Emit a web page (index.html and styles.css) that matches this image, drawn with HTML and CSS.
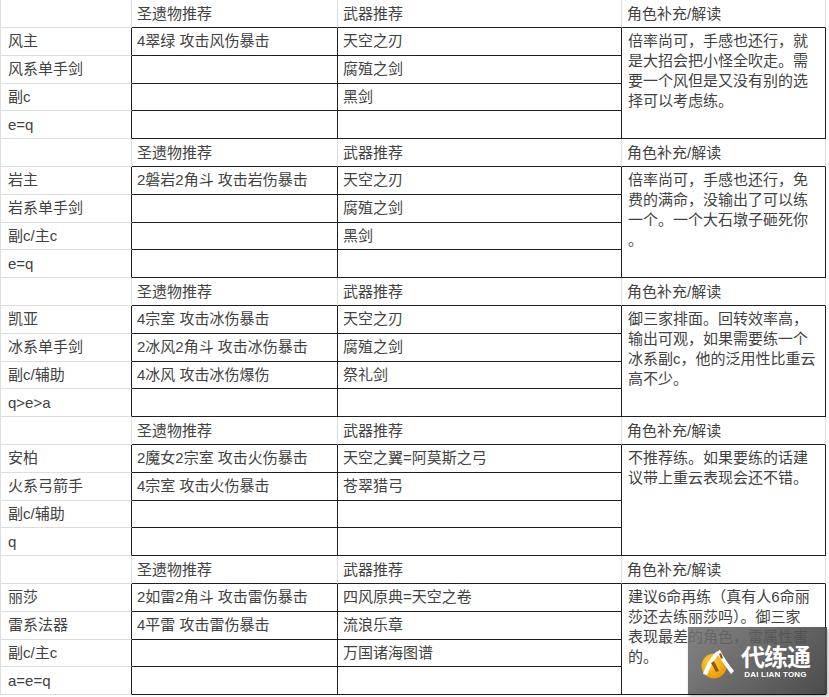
FILE: index.html
```html
<!DOCTYPE html>
<html lang="zh-CN">
<head>
<meta charset="utf-8">
<title>角色推荐</title>
<link rel="stylesheet" href="styles.css">
</head>
<body>
<div class="sheet">
  <section class="block">
    <div class="cell name head"></div><div class="cell head">圣遗物推荐</div><div class="cell head">武器推荐</div><div class="cell head">角色补充/解读</div>
    <div class="cell name">风主</div><div class="cell d">4翠绿 攻击风伤暴击</div><div class="cell d">天空之刃</div>
    <div class="cell note">倍率尚可，手感也还行，就<br>是大招会把小怪全吹走。需<br>要一个风但是又没有别的选<br>择可以考虑练。</div>
    <div class="cell name">风系单手剑</div><div class="cell d"></div><div class="cell d">腐殖之剑</div>
    <div class="cell name">副c</div><div class="cell d"></div><div class="cell d">黑剑</div>
    <div class="cell name">e=q</div><div class="cell d"></div><div class="cell d"></div>
  </section>
  <section class="block">
    <div class="cell name head"></div><div class="cell head">圣遗物推荐</div><div class="cell head">武器推荐</div><div class="cell head">角色补充/解读</div>
    <div class="cell name">岩主</div><div class="cell d">2磐岩2角斗 攻击岩伤暴击</div><div class="cell d">天空之刃</div>
    <div class="cell note">倍率尚可，手感也还行，免<br>费的满命，没输出了可以练<br>一个。一个大石墩子砸死你<br>。</div>
    <div class="cell name">岩系单手剑</div><div class="cell d"></div><div class="cell d">腐殖之剑</div>
    <div class="cell name">副c/主c</div><div class="cell d"></div><div class="cell d">黑剑</div>
    <div class="cell name">e=q</div><div class="cell d"></div><div class="cell d"></div>
  </section>
  <section class="block">
    <div class="cell name head"></div><div class="cell head">圣遗物推荐</div><div class="cell head">武器推荐</div><div class="cell head">角色补充/解读</div>
    <div class="cell name">凯亚</div><div class="cell d">4宗室 攻击冰伤暴击</div><div class="cell d">天空之刃</div>
    <div class="cell note">御三家排面。回转效率高，<br>输出可观，如果需要练一个<br>冰系副c，他的泛用性比重云<br>高不少。</div>
    <div class="cell name">冰系单手剑</div><div class="cell d">2冰风2角斗 攻击冰伤暴击</div><div class="cell d">腐殖之剑</div>
    <div class="cell name">副c/辅助</div><div class="cell d">4冰风 攻击冰伤爆伤</div><div class="cell d">祭礼剑</div>
    <div class="cell name">q&gt;e&gt;a</div><div class="cell d"></div><div class="cell d"></div>
  </section>
  <section class="block">
    <div class="cell name head"></div><div class="cell head">圣遗物推荐</div><div class="cell head">武器推荐</div><div class="cell head">角色补充/解读</div>
    <div class="cell name">安柏</div><div class="cell d">2魔女2宗室 攻击火伤暴击</div><div class="cell d">天空之翼=阿莫斯之弓</div>
    <div class="cell note">不推荐练。如果要练的话建<br>议带上重云表现会还不错。</div>
    <div class="cell name">火系弓箭手</div><div class="cell d">4宗室 攻击火伤暴击</div><div class="cell d">苍翠猎弓</div>
    <div class="cell name">副c/辅助</div><div class="cell d"></div><div class="cell d"></div>
    <div class="cell name">q</div><div class="cell d"></div><div class="cell d"></div>
  </section>
  <section class="block">
    <div class="cell name head"></div><div class="cell head">圣遗物推荐</div><div class="cell head">武器推荐</div><div class="cell head">角色补充/解读</div>
    <div class="cell name">丽莎</div><div class="cell d">2如雷2角斗 攻击雷伤暴击</div><div class="cell d">四风原典=天空之卷</div>
    <div class="cell note">建议6命再练（真有人6命丽<br>莎还去练丽莎吗）。御三家<br>表现最差的角色，雷属性害<br>的。</div>
    <div class="cell name">雷系法器</div><div class="cell d">4平雷 攻击雷伤暴击</div><div class="cell d">流浪乐章</div>
    <div class="cell name">副c/主c</div><div class="cell d"></div><div class="cell d">万国诸海图谱</div>
    <div class="cell name">a=e=q</div><div class="cell d"></div><div class="cell d"></div>
  </section>
</div>
<div class="watermark">
  <svg class="wm-logo" width="36" height="34" viewBox="0 0 36 34">
    <defs>
      <radialGradient id="yg" cx="0.4" cy="0.35" r="0.7">
        <stop offset="0" stop-color="#ffd23a"/>
        <stop offset="1" stop-color="#e99600"/>
      </radialGradient>
    </defs>
    <circle cx="14" cy="20" r="12.5" fill="url(#yg)"/>
    <path d="M3 28 C6 19 10 12 16 6 L19 8 C14 14 10 21 7 29 Z" fill="#fff"/>
    <path d="M16 6 L20 4 C24 12 29 19 34 25 L31 28 C26 21 21 14 16 6 Z" fill="#fff"/>
    <path d="M11 17 L14 15 L19 25 L16 26 Z" fill="#8a5a10"/>
    <path d="M19 8 L21 7 L23 12 L21 13 Z" fill="#8a5a10"/>
  </svg>
  <div class="wm-text">
    <div class="wm-cn">代练通</div>
    <div class="wm-en">DAI LIAN TONG</div>
  </div>
</div>
</body>
</html>
```
FILE: styles.css
```css
html, body {
  margin: 0;
  padding: 0;
  background: #fff;
}
body {
  font-family: "Liberation Sans", "Noto Sans CJK SC", sans-serif;
  font-size: 15px;
  color: #424242;
  width: 829px;
  height: 697px;
  overflow: hidden;
  position: relative;
}
.sheet {
  display: flex;
  flex-direction: column;
}
.block {
  display: grid;
  grid-template-columns: 132px 206px 284px 204px;
  grid-template-rows: 28px repeat(4, 27.75px);
}
.cell {
  box-sizing: border-box;
  border-right: 1px solid #dedede;
  border-bottom: 1px solid #dedede;
  padding: 0 5px;
  display: flex;
  align-items: center;
  white-space: nowrap;
  line-height: 20px;
}
.name {
  border-left: 1px solid #dedede;
  padding-left: 7px;
  border-right: 1px solid #1f1f1f;
}
.head {
  border-bottom: 1px solid #1f1f1f;
}
.name.head {
  border-right: 1px solid #dedede;
  border-bottom: 1px solid #dedede;
}
.d {
  border-right: 1px solid #1f1f1f;
  border-bottom: 1px solid #1f1f1f;
}
.note {
  grid-column: 4;
  grid-row: 2 / 6;
  padding: 3px 5px 0 6px;
  border-right: 1px solid #1f1f1f;
  border-bottom: 1px solid #1f1f1f;
  display: block;
}
.watermark {
  position: absolute;
  left: 688px;
  top: 627px;
  width: 139px;
  height: 67px;
  box-sizing: border-box;
  background: linear-gradient(135deg, rgba(115,115,115,0.88), rgba(60,60,60,0.92));
  box-shadow: 1px 2px 3px rgba(0,0,0,0.35);
  display: flex;
  align-items: center;
  padding-left: 12px;
  gap: 5px;
}
.wm-logo {
  flex: none;
  margin-top: 4px;
}
.wm-text {
  display: flex;
  flex-direction: column;
  align-items: center;
  color: #fff;
  margin-top: 3px;
}
.wm-cn {
  font-family: "Noto Sans CJK SC", sans-serif;
  font-weight: 700;
  font-size: 24px;
  line-height: 26px;
  letter-spacing: -1px;
}
.wm-en {
  font-family: "Liberation Sans", sans-serif;
  font-weight: 700;
  font-size: 8px;
  line-height: 12px;
  letter-spacing: 0.2px;
}
```
